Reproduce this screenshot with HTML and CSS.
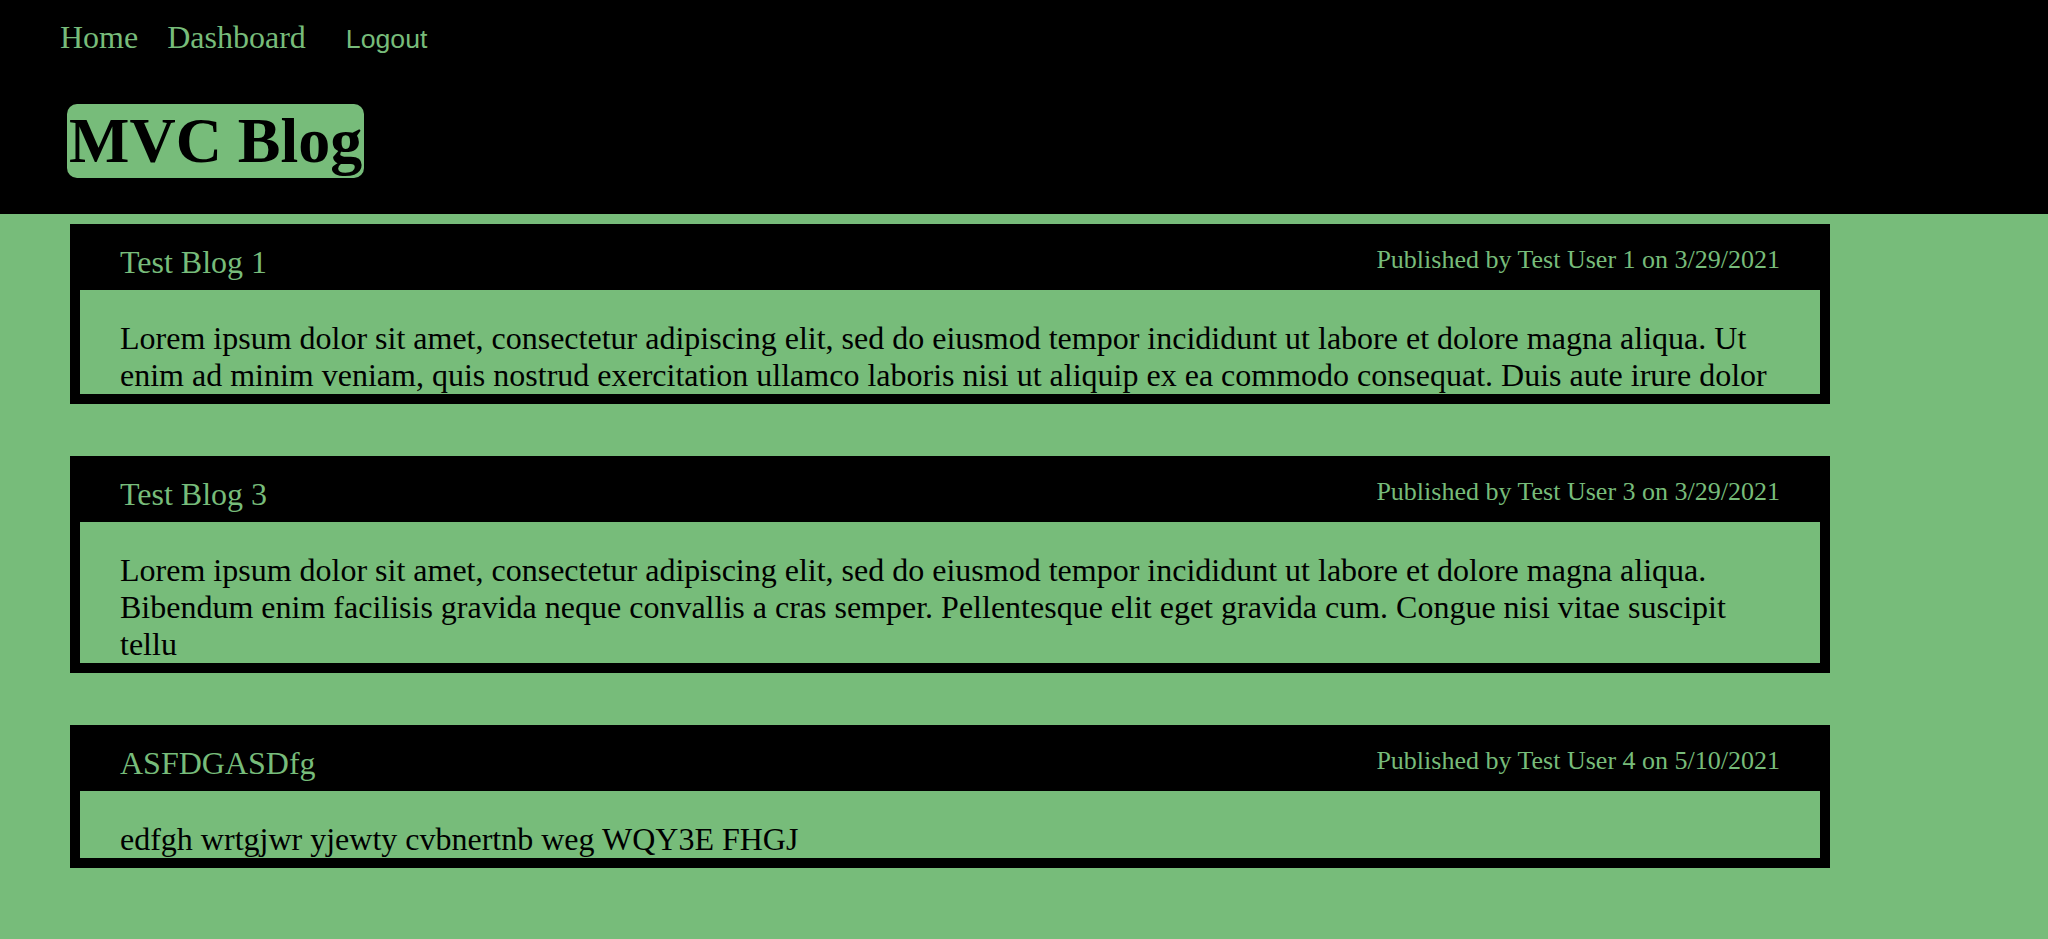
FILE: index.html
```html
<!DOCTYPE html>
<html lang="en">
<head>
<meta charset="utf-8">
<title>MVC Blog</title>
<link rel="stylesheet" href="styles.css">
</head>
<body>
<header class="site-header">
  <nav class="nav">
    <a class="nav-link" href="#">Home</a>
    <a class="nav-link" href="#">Dashboard</a>
    <button class="nav-button" type="button">Logout</button>
  </nav>
  <h1 class="brand">MVC Blog</h1>
</header>
<main class="posts">
  <article class="post">
    <div class="post-head">
      <h2 class="post-title">Test Blog 1</h2>
      <p class="post-meta">Published by Test User 1 on 3/29/2021</p>
    </div>
    <div class="post-body">
      <p class="post-text">Lorem ipsum dolor sit amet, consectetur adipiscing elit, sed do eiusmod tempor incididunt ut labore et dolore magna aliqua. Ut enim ad minim veniam, quis nostrud exercitation ullamco laboris nisi ut aliquip ex ea commodo consequat. Duis aute irure dolor</p>
    </div>
  </article>
  <article class="post">
    <div class="post-head">
      <h2 class="post-title">Test Blog 3</h2>
      <p class="post-meta">Published by Test User 3 on 3/29/2021</p>
    </div>
    <div class="post-body">
      <p class="post-text">Lorem ipsum dolor sit amet, consectetur adipiscing elit, sed do eiusmod tempor incididunt ut labore et dolore magna aliqua. Bibendum enim facilisis gravida neque convallis a cras semper. Pellentesque elit eget gravida cum. Congue nisi vitae suscipit tellu</p>
    </div>
  </article>
  <article class="post">
    <div class="post-head">
      <h2 class="post-title">ASFDGASDfg</h2>
      <p class="post-meta">Published by Test User 4 on 5/10/2021</p>
    </div>
    <div class="post-body">
      <p class="post-text">edfgh wrtgjwr yjewty cvbnertnb weg WQY3E FHGJ</p>
    </div>
  </article>
</main>
</body>
</html>
```

FILE: styles.css
```css
* {
  box-sizing: border-box;
}

body {
  margin: 0;
  background: #77bc7a;
  font-family: "Liberation Serif", "Times New Roman", serif;
  font-size: 32px;
  color: #000;
  min-height: 939px;
}

.site-header {
  background: #000;
  height: 214px;
  padding: 19px 0 0 60px;
}

.nav {
  display: flex;
  align-items: baseline;
}

.nav-link {
  color: #77bc7a;
  text-decoration: none;
  font-size: 32px;
  margin-right: 29px;
}

.nav-link + .nav-link {
  margin-right: 40px;
}

.nav-button {
  font-family: "Liberation Sans", Arial, sans-serif;
  font-size: 26.67px;
  color: #77bc7a;
  background: none;
  border: 0;
  padding: 0;
  cursor: pointer;
}

.brand {
  width: fit-content;
  margin: 48px 0 0 7px;
  padding: 0 2px;
  background: #77bc7a;
  border-radius: 10px;
  font-size: 64px;
  font-weight: bold;
  line-height: normal;
  color: #000;
}

.posts {
  display: flex;
  flex-direction: column;
  gap: 52px;
  padding: 10px 0 0 70px;
  width: 1830px;
}

.post {
  background: #000;
  padding: 10px;
}

.post-head {
  display: flex;
  justify-content: space-between;
  align-items: center;
  height: 56px;
  padding: 0 40px;
}

.post-title {
  margin: 0;
  font-size: 32px;
  font-weight: normal;
  color: #77bc7a;
}

.post-meta {
  margin: 0;
  padding-bottom: 5px;
  font-size: 26px;
  color: #77bc7a;
}

.post-body {
  background: #77bc7a;
  padding: 30px 40px 0;
}

.post-text {
  margin: 0;
  font-size: 32px;
  line-height: normal;
}
```
